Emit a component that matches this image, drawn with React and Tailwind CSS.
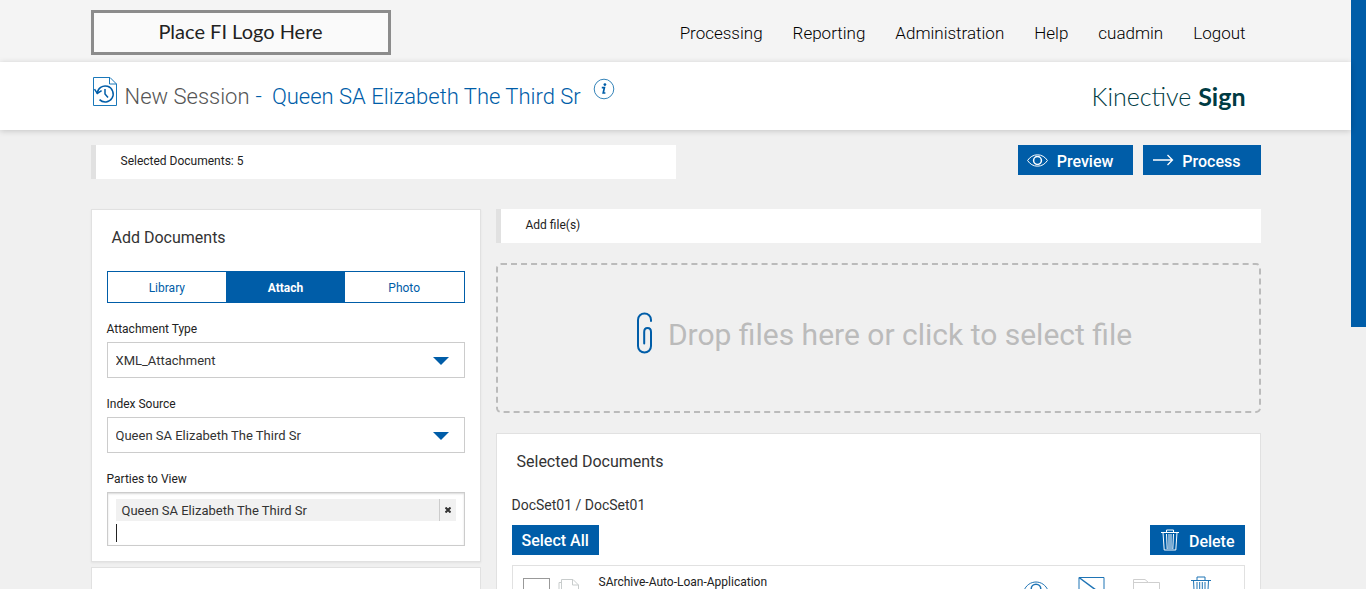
import { useState } from "react";

const navItems = ["Processing", "Reporting", "Administration", "Help", "cuadmin", "Logout"];

function SessionIcon() {
  return (
    <svg width="25" height="30" viewBox="0 0 25 30" fill="none" stroke="#1a78ba" aria-hidden="true">
      <path d="M0.5 0.5H17L23.5 7V28.5H0.5Z" />
      <path d="M16.5 0.5V7H23.5" />
      <path d="M4.2 16.5A8 8 0 1 1 6.5 22.6" stroke="#005da8" strokeWidth="1.5" />
      <path d="M1.5 12.2L4.3 16.4L8.6 13.6M12 12V17L15 20.5" stroke="#005da8" strokeWidth="1.5" />
    </svg>
  );
}

function InfoIcon() {
  return (
    <svg width="22" height="22" viewBox="0 0 22 22" aria-hidden="true">
      <circle cx="11" cy="11" r="9.8" fill="none" stroke="#3584b9" strokeWidth="1" />
      <circle cx="11.9" cy="6.6" r="1.4" fill="#005da8" />
      <path d="M8.8 9.6H11.4L10.2 15H12.4" fill="none" stroke="#005da8" strokeWidth="1.7" />
    </svg>
  );
}

function EyeIcon() {
  return (
    <svg width="21" height="13" viewBox="0 0 21 13" fill="none" stroke="currentColor" aria-hidden="true">
      <path d="M0.6 6.5C2.8 3 6.4 0.8 10.5 0.8S18.2 3 20.4 6.5C18.2 10 14.6 12.2 10.5 12.2S2.8 10 0.6 6.5Z" />
      <circle cx="10.5" cy="6.5" r="3.9" strokeWidth="1.5" />
    </svg>
  );
}

function ArrowIcon() {
  return (
    <svg width="22" height="12" viewBox="0 0 22 12" fill="none" stroke="currentColor" strokeWidth="1.3" aria-hidden="true">
      <path d="M1 6H20.5M15.5 1L20.5 6L15.5 11" />
    </svg>
  );
}

function TrashIcon() {
  return (
    <svg width="20" height="22" viewBox="0 0 20 22" fill="none" stroke="currentColor" aria-hidden="true">
      <path d="M1 3.5H19M6.5 3.5V1H13.5V3.5M3 3.5L4.2 21H15.8L17 3.5M6.5 5L7.2 20M9 5V20M11 5V20M13.5 5L12.8 20" />
    </svg>
  );
}

function ClipIcon() {
  return (
    <svg width="17" height="42" viewBox="0 0 17 42" fill="none" stroke="#005da8" strokeWidth="2" strokeLinecap="round" aria-hidden="true">
      <path d="M15 9V8C15 4 12 1.5 8.5 1.5S2 4 2 8V34C2 38 5 40.5 8.5 40.5S15 38 15 34V20C15 17.5 13.5 16 11.5 16S8.2 17.5 8.2 20V31.5" />
    </svg>
  );
}

function NoticeBar({ children, className = "" }) {
  return (
    <div className={`h-[34px] border-l-[5px] border-[#e1e1e1] bg-white pl-[25px] text-xs leading-[32px] text-[#222] ${className}`}>
      {children}
    </div>
  );
}

function SelectField({ id, label, value }) {
  return (
    <div className="mb-[15px]">
      <label htmlFor={id} className="mb-[2px] block text-xs leading-[22px] text-[#222]">{label}</label>
      <div className="grid items-center">
        <select id={id} className="col-start-1 row-start-1 h-9 w-full appearance-none border border-[#ccc] bg-white px-2 pt-[2px] text-[13px] text-[#333]">
          <option>{value}</option>
        </select>
        <svg className="pointer-events-none col-start-1 row-start-1 mt-px mr-4 justify-self-end" width="16" height="8" viewBox="0 0 16 8" aria-hidden="true">
          <path d="M0 0H16L8 8Z" fill="#005da8" />
        </svg>
      </div>
    </div>
  );
}

function AddDocuments() {
  const [tab, setTab] = useState("Attach");
  return (
    <section className="border border-[#e1e1e1] bg-white px-[15px] pb-[15px] shadow-[0_1px_2px_rgba(0,0,0,0.06)]">
      <h2 className="mb-[18px] px-[5px] pt-[13px] text-base leading-[30px] text-[#333]">Add Documents</h2>
      <div className="mb-[15px] grid h-8 grid-cols-3 border border-[#005da8] text-xs">
        {["Library", "Attach", "Photo"].map((name) => (
          <button
            key={name}
            type="button"
            onClick={() => setTab(name)}
            className={name === tab ? "bg-[#005da8] pt-px font-bold text-white" : "bg-white pt-px text-[#005da8]"}
          >
            {name}
          </button>
        ))}
      </div>
      <SelectField id="attachment-type" label="Attachment Type" value="XML_Attachment" />
      <SelectField id="index-source" label="Index Source" value="Queen SA Elizabeth The Third Sr" />
      <label htmlFor="parties" className="mb-[2px] block text-xs leading-[22px] text-[#222]">Parties to View</label>
      <div className="border border-[#ccc] px-2 pt-[6px] pb-[3px] shadow-[inset_0_1px_2px_rgba(0,0,0,0.15)]">
        <div className="flex h-[22px] items-center bg-[#f1f1f1] text-[13px] text-[#333]">
          <span className="flex-1 pt-[2px] pl-[6px]">Queen SA Elizabeth The Third Sr</span>
          <button type="button" aria-label="Remove party" className="flex h-full w-[17px] items-center justify-center border-l border-[#ccc]">
            <svg width="6" height="6" viewBox="0 0 6 6" stroke="#333" strokeWidth="2" aria-hidden="true">
              <path d="M0.5 0.5L5.5 5.5M5.5 0.5L0.5 5.5" />
            </svg>
          </button>
        </div>
        <div className="mt-[3px] flex h-[18px] border-l border-[#222]">
          <input id="parties" type="text" className="w-full bg-transparent text-[13px] outline-none" />
        </div>
      </div>
    </section>
  );
}

function DocumentRow({ name }) {
  return (
    <li className="flex h-20 items-start border border-[#e1e1e1] pr-8 pl-[10px]">
      <input type="checkbox" aria-label={`Select ${name}`} className="mt-3 h-[27px] w-[27px] appearance-none border border-[#999] bg-white" />
      <svg className="mt-[13px] ml-2" width="22" height="26" viewBox="0 0 22 26" fill="none" stroke="#c8cccc" aria-hidden="true">
        <path d="M3.5 0.5H15L20.5 6V22.5H3.5ZM14.5 0.5V6H20.5M3 3.5H1V25.5H17V23" />
      </svg>
      <span className="mt-2 ml-[19px] flex-1 text-xs leading-4 text-[#222]">{name}</span>
      <div className="flex items-start pt-[10px] text-[#1f74b5]">
        <button type="button" aria-label="View" className="mt-[5px] mr-[29px]">
          <svg width="26" height="20" viewBox="0 0 26 20" fill="none" stroke="currentColor" aria-hidden="true">
            <path d="M0.8 10C3 4 8 1 13 1S23 4 25.2 10C23 16 18 19 13 19S3 16 0.8 10Z" />
            <circle cx="13" cy="8" r="4.8" strokeWidth="1.5" />
          </svg>
        </button>
        <button type="button" aria-label="Send" className="mr-[28px]">
          <svg width="27" height="22" viewBox="0 0 27 22" fill="none" stroke="currentColor" aria-hidden="true">
            <path d="M1 1.5H26V21.5H1Z" />
            <path d="M1 1.5L26 20" strokeWidth="1.5" />
          </svg>
        </button>
        <button type="button" aria-label="Move" className="mt-[3px] mr-[30px] text-[#cfcfcf]">
          <svg width="27" height="20" viewBox="0 0 27 20" fill="none" stroke="currentColor" aria-hidden="true">
            <path d="M0.5 19.5V0.5H12L15.5 3.5H26.5V19.5ZM0.5 3.5H15.5" />
          </svg>
        </button>
        <button type="button" aria-label="Delete document">
          <svg width="22" height="24" viewBox="0 0 22 24" fill="none" stroke="currentColor" aria-hidden="true">
            <path d="M1 4.5H21M7 4.5V1H15V4.5M3.5 4.5L4.5 23H17.5L18.5 4.5M7 6V21M9.7 6V21M12.3 6V21M15 6V21" />
          </svg>
        </button>
      </div>
    </li>
  );
}

export default function App() {
  return (
    <div className="flex h-screen overflow-hidden bg-[#f0f0f0] font-['Roboto',sans-serif]">
      <div className="min-w-0 flex-1">
        <header className="bg-[#f4f4f4]">
          <div className="mx-auto flex h-[62px] max-w-[1170px] items-center justify-between pt-[3px] pr-[15px]">
            <div className="flex h-[45px] w-[300px] items-center justify-center border-3 border-[#8c8c8c] bg-[#fafafa] pb-[3px] font-['Lato',sans-serif] text-xl text-[#222]">
              Place FI Logo Here
            </div>
            <nav className="flex gap-[30px] pt-[2px] text-[17px] font-light text-black">
              {navItems.map((item) => (
                <a key={item} href="#">{item}</a>
              ))}
            </nav>
          </div>
        </header>

        <div className="relative bg-white shadow-[0_1px_6px_rgba(0,0,0,0.18)]">
          <div className="mx-auto flex h-[68px] max-w-[1170px] items-center justify-between pr-[15px] pl-[2px]">
            <h1 className="flex items-center text-[22px] font-light text-[#005da8]">
              <span className="mr-[7px] pb-2"><SessionIcon /></span>
              <span className="text-[#555]">New Session</span>
              <span className="mx-[6px]">-</span>
              <span className="ml-1">Queen SA Elizabeth The Third Sr</span>
              <button type="button" aria-label="Session information" className="mb-[14px] ml-3"><InfoIcon /></button>
            </h1>
            <div className="pt-[2px] font-['Lato',sans-serif] text-[25px] font-light text-[#003b43]">
              Kinective <span className="font-bold">Sign</span>
            </div>
          </div>
        </div>

        <main className="mx-auto max-w-[1170px] pt-[15px]">
          <div className="mb-[30px] flex items-start justify-between">
            <NoticeBar className="w-1/2">Selected Documents: 5</NoticeBar>
            <div className="flex gap-[10px] text-base font-medium text-white">
              <button type="button" className="flex h-[30px] items-center gap-[9px] bg-[#005da8] pr-5 pl-[9px]"><EyeIcon /><span className="pt-1">Preview</span></button>
              <button type="button" className="flex h-[30px] items-center gap-2 bg-[#005da8] pr-5 pl-[9px]"><ArrowIcon /><span className="pt-1">Process</span></button>
            </div>
          </div>

          <div className="flex gap-[15px]">
            <div className="flex w-1/3 shrink-0 flex-col gap-[5px]">
              <AddDocuments />
              <section className="h-40 border border-[#e1e1e1] bg-white" />
            </div>
            <div className="min-w-0 flex-1">
              <NoticeBar>Add file(s)</NoticeBar>
              <button type="button" className="mt-5 flex h-[150px] w-full items-center justify-center gap-[15px] rounded-[5px] border-2 border-dashed border-[#bbb] pb-[11px] pl-3 text-3xl text-[#bbb]">
                <ClipIcon />
                <span className="pt-1">Drop files here or click to select file</span>
              </button>
              <section className="mt-5 border border-[#e1e1e1] bg-white px-[15px] pb-10">
                <h2 className="px-[5px] pt-[13px] text-base leading-[30px] text-[#333]">Selected Documents</h2>
                <p className="mt-[17px] text-sm leading-[22px] text-[#333]">DocSet01 / DocSet01</p>
                <div className="mt-[9px] flex justify-between text-base font-medium text-white">
                  <button type="button" className="h-[30px] bg-[#005da8] px-[10px] pt-px">Select All</button>
                  <button type="button" className="flex h-[30px] items-center gap-[9px] bg-[#005da8] px-[10px]">
                    <TrashIcon />
                    <span className="pt-1">Delete</span>
                  </button>
                </div>
                <ul className="mt-[10px]">
                  <DocumentRow name="SArchive-Auto-Loan-Application" />
                </ul>
              </section>
            </div>
          </div>
        </main>
      </div>
      <div className="w-[15px] shrink-0" aria-hidden="true">
        <div className="h-[327px] bg-[#005da8]" />
      </div>
    </div>
  );
}
